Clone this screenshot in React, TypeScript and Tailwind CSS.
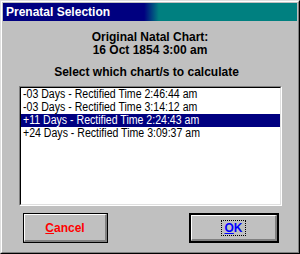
import React from 'react';

const charts = [
  '-03 Days - Rectified Time 2:46:44 am',
  '-03 Days - Rectified Time 3:14:12 am',
  '+11 Days - Rectified Time 2:24:43 am',
  '+24 Days - Rectified Time 3:09:37 am',
];

const App: React.FC = () => {
  const selected = 2;

  return (
    <div className="w-[300px] h-[254px] font-['Liberation_Sans',Arial,sans-serif] border border-t-[#dfdfdf] border-l-[#dfdfdf] border-r-black border-b-black">
      <div className="h-full flex flex-col p-[1px] bg-[#c0c0c0] border border-t-white border-l-white border-r-[#808080] border-b-[#808080]">
        {/* title bar */}
        <div className="h-[18px] shrink-0 pl-[3px] text-white font-bold text-[12px] leading-[18px] bg-[linear-gradient(to_right,#000080_48%,#008080_53%)]">
          Prenatal Selection
        </div>

        <div className="flex-1 flex flex-col pt-[10px] text-black">
          <div className="text-center font-bold text-[12px] leading-[13px]">
            <div>Original Natal Chart:</div>
            <div>16 Oct 1854 3:00 am</div>
          </div>
          <div className="mt-[9px] pr-[7px] text-center font-bold text-[12px] leading-[13px]">
            Select which chart/s to calculate
          </div>

          {/* list box */}
          <div className="mt-[7px] ml-[16px] w-[263px] h-[120px] border border-t-[#808080] border-l-[#808080] border-r-white border-b-white">
            <div className="h-full bg-white border border-t-black border-l-black border-r-[#dfdfdf] border-b-[#dfdfdf]">
              {charts.map((c, i) => (
                <div
                  key={i}
                  className={`h-[13px] pl-[2px] text-[12px] leading-[13px] whitespace-nowrap ${
                    i === selected ? 'bg-[#000080] text-white' : 'text-black'
                  }`}
                >
                  <span className="inline-block origin-left scale-x-[0.88]">{c}</span>
                </div>
              ))}
            </div>
          </div>

          {/* buttons */}
          <div className="mt-[7px] flex">
            <div className="ml-[20px] w-[85px] h-[30px] border border-black">
              <div className="h-full flex items-center justify-center bg-[#c0c0c0] border-t border-l border-t-white border-l-white border-r-2 border-b-2 border-r-[#808080] border-b-[#808080]">
                <span className="font-bold text-[12px] leading-[14px] text-[#ff0000]">
                  <u>C</u>ancel
                </span>
              </div>
            </div>
            <div className="ml-[81px] w-[90px] h-[30px] border-2 border-black">
              <div className="h-full flex items-center justify-center bg-[#c0c0c0] border-t border-l border-t-white border-l-white border-r-2 border-b-2 border-r-[#808080] border-b-[#808080]">
                <span className="px-[2px] h-[16px] flex items-center border border-dotted border-black font-bold text-[12px] leading-[14px] text-[#0000ff]">
                  <u>O</u>K
                </span>
              </div>
            </div>
          </div>
        </div>
      </div>
    </div>
  );
};

export default App;
